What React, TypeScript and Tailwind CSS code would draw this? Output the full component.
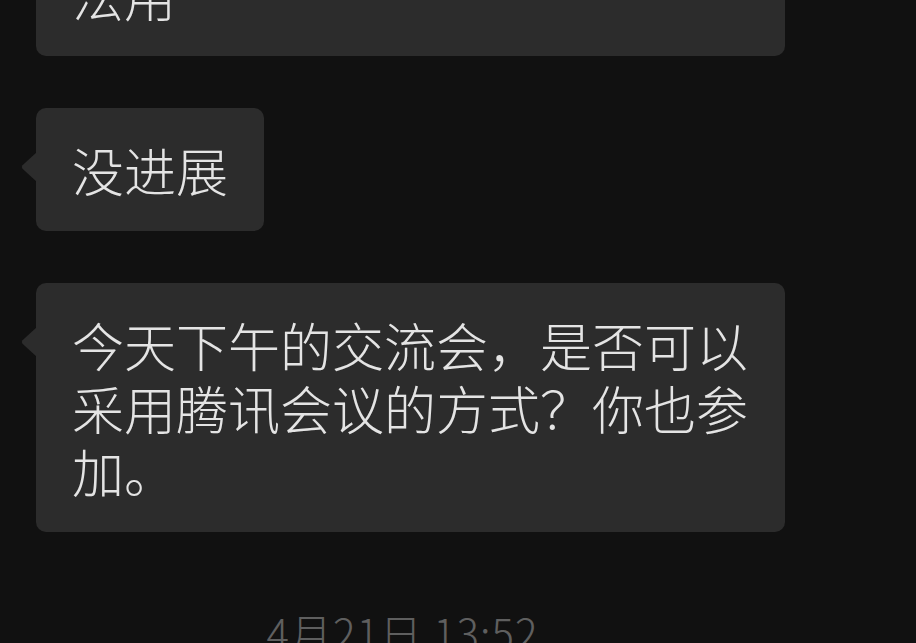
import React from 'react'

const font = { fontFamily: '"Noto Sans CJK SC", "Noto Sans", sans-serif' }

function Tail() {
  return (
    <svg
      className="absolute left-[-15px] top-[44px]"
      width="16"
      height="30"
      viewBox="0 0 16 30"
    >
      <path d="M16 0 L1.5 13.2 Q0 15 1.5 16.8 L16 30 Z" fill="#2c2c2c" />
    </svg>
  )
}

function Bubble({ children, className = '', tail = true }: { children: React.ReactNode; className?: string; tail?: boolean }) {
  return (
    <div
      className={`relative max-w-[749px] rounded-[10px] bg-[#2c2c2c] px-[36px] py-[30px] text-[52px] font-light leading-[63px] text-[#e4e4e4] ${className}`}
    >
      {tail && <Tail />}
      {children}
    </div>
  )
}

export default function App() {
  return (
    <div className="h-[643px] w-[916px] overflow-hidden bg-[#111111]" style={font}>
      <div className="flex flex-col items-start gap-[52px] pl-[36px]">
        <Bubble className="mt-[-67px] w-[749px]" tail={false}>
          法用
        </Bubble>
        <Bubble>没进展</Bubble>
        <Bubble>今天下午的交流会，是否可以采用腾讯会议的方式？你也参加。</Bubble>
      </div>
      <div className="mt-[72px] w-[785px] pl-[20px] text-center text-[42px] font-light leading-[56px] tracking-[1px] text-[#5f5f5f]">
        4月21日 13:52
      </div>
    </div>
  )
}
